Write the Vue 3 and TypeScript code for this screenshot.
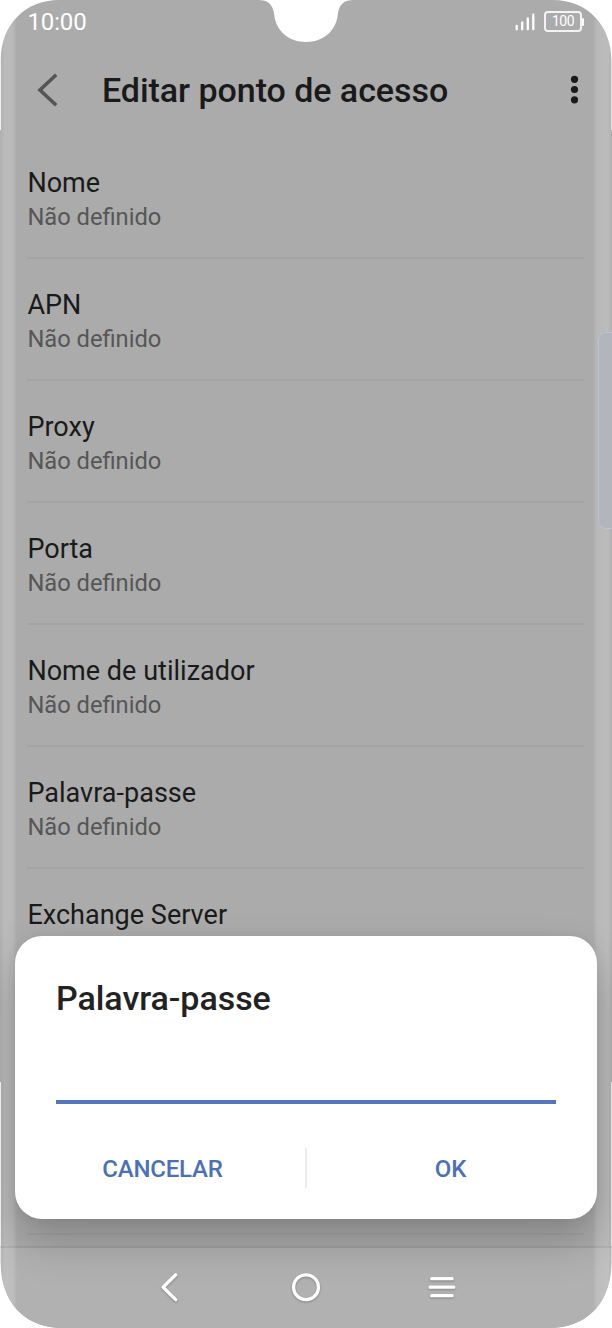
<script setup lang="ts">
import { ref } from 'vue'

interface Setting {
  label: string
  value: string
}

const unset = 'Não definido'
const settings: Setting[] = [
  { label: 'Nome', value: unset },
  { label: 'APN', value: unset },
  { label: 'Proxy', value: unset },
  { label: 'Porta', value: unset },
  { label: 'Nome de utilizador', value: unset },
  { label: 'Palavra-passe', value: unset },
  { label: 'Exchange Server', value: unset },
  { label: 'MMSC', value: unset },
]
const password = ref('')
</script>

<template>
  <div class="phone">
    <header class="status">
      <span class="time">10:00</span>
      <svg class="signal" width="20" height="18" viewBox="0 0 20 18">
        <path d="M1.7 12.8V16.3M7.2 9.3V16.3M12.8 5.4V16.3M18.3 1.7V16.3" />
      </svg>
      <span class="battery">100</span>
    </header>

    <div class="appbar">
      <svg class="back" width="24" height="36" viewBox="0 0 24 36">
        <path d="M21.2 2.8L5 18L21.2 33.2" />
      </svg>
      <h1>Editar ponto de acesso</h1>
      <svg class="more" width="10" height="30" viewBox="0 0 10 30">
        <circle cx="4.5" cy="4.3" r="3.6" /><circle cx="4.5" cy="14.5" r="3.6" /><circle cx="4.5" cy="24.8" r="3.6" />
      </svg>
    </div>

    <ul class="list">
      <li v-for="item in settings" :key="item.label">
        <span class="label">{{ item.label }}</span>
        <span class="value">{{ item.value }}</span>
      </li>
    </ul>

    <div class="navbar">
      <svg width="32" height="32" viewBox="0 0 32 32"><path d="M21.7 3.8L9.1 16.2L21.7 28.6" /></svg>
      <svg width="32" height="32" viewBox="0 0 32 32"><circle cx="16" cy="16.2" r="12.4" /></svg>
      <svg width="32" height="32" viewBox="0 0 32 32"><path d="M5.7 7.7H26.1M4.1 16.2H27.8M5.7 24.7H26.1" /></svg>
    </div>

    <div class="edge left"></div>
    <div class="edge right"></div>
    <div class="handle"></div>

    <section class="dialog">
      <h2>Palavra-passe</h2>
      <input v-model="password" type="password" aria-label="Palavra-passe" />
      <div class="actions">
        <button type="button">CANCELAR</button>
        <button type="button">OK</button>
      </div>
    </section>
  </div>
</template>

<style>
body {
  margin: 0;
  background: #fff;
}
</style>

<style scoped>
.phone {
  position: relative;
  width: 612px;
  height: 1328px;
  overflow: hidden;
  display: flex;
  flex-direction: column;
  background: #ababab;
  font-family: Roboto, "Liberation Sans", sans-serif;
  color: #1a1a1a;
  clip-path: path("M59 0H258C268 0 273 4 274.3 15C276 31 289 42 306 42C323 42 336 31 337.7 15C339 4 344 0 354 0H553C587 0 611.3 25 611.3 60V130H612V1082H611.3V1262C611.3 1303 587 1328 549 1328H63C25 1328 0.8 1303 0.8 1262V1082H0V130H0.8V60C0.8 25 25 0 59 0Z");
}
.status {
  flex: none;
  box-sizing: border-box;
  height: 44px;
  display: flex;
  align-items: center;
  padding: 0 28px 2px 27.5px;
  color: #fff;
}
.time {
  flex: 1;
  font-size: 24px;
  line-height: 28px;
  letter-spacing: -0.15px;
  padding-top: 2px;
}
.signal {
  margin: 2px 9px 0 0;
  fill: none;
  stroke: #fff;
  stroke-width: 2.3;
  stroke-linecap: round;
}
.battery {
  position: relative;
  box-sizing: border-box;
  width: 38px;
  height: 21px;
  border: 2px solid rgba(255, 255, 255, 0.85);
  border-radius: 4px;
  font-size: 14px;
  line-height: 17px;
  letter-spacing: -0.5px;
  text-align: center;
  margin-right: 2px;
}
.battery::after {
  content: "";
  position: absolute;
  left: 36px;
  top: 5px;
  width: 2px;
  height: 8px;
  border-radius: 1px;
  background: #fff;
}
.appbar {
  flex: none;
  height: 93px;
  box-sizing: border-box;
  display: flex;
  align-items: center;
  padding: 0 32px 1px 35px;
}
.back {
  fill: none;
  stroke: #555;
  stroke-width: 3.6;
}
h1 {
  flex: 1;
  margin: 0 0 0 43px;
  font-size: 34px;
  line-height: 40px;
  font-weight: 500;
  letter-spacing: -0.05px;
}
.more {
  fill: #1a1a1a;
}
.list {
  flex: none;
  height: 1109px;
  overflow: hidden;
  list-style: none;
  margin: 0;
  padding: 0 28px 0 27.4px;
}
.list li {
  box-sizing: border-box;
  height: 122px;
  padding-top: 30px;
  border-bottom: 2px solid #a4a4a4;
  display: flex;
  flex-direction: column;
}
.list li:last-child {
  height: 244px;
}
.label {
  font-size: 27px;
  line-height: 32px;
  letter-spacing: 0.02px;
}
.value {
  margin-top: 4px;
  font-size: 23.7px;
  line-height: 28px;
  color: #565656;
}
.navbar {
  flex: none;
  height: 82px;
  box-sizing: border-box;
  padding-bottom: 3px;
  border-top: 2px solid #a0a0a0;
  background: #b1b1b1;
  display: flex;
  justify-content: center;
  align-items: center;
}
.navbar svg {
  margin: 0 52px;
  fill: none;
  stroke: #fff;
  stroke-width: 3.3;
  stroke-linecap: round;
  stroke-linejoin: round;
  filter: drop-shadow(0 1px 1px rgba(0, 0, 0, 0.25));
}
.edge {
  position: absolute;
  top: 0;
  bottom: 0;
  width: 17px;
}
.left {
  left: 0;
  background: linear-gradient(90deg, rgba(255, 255, 255, 0.05), rgba(255, 255, 255, 0.19) 5px, rgba(255, 255, 255, 0.16) 13px, transparent);
}
.right {
  right: 0;
  width: 19px;
  background: linear-gradient(270deg, rgba(255, 255, 255, 0.06), rgba(255, 255, 255, 0.2) 4px, rgba(255, 255, 255, 0.16) 15px, transparent);
}
.handle {
  position: absolute;
  right: -8px;
  top: 332px;
  box-sizing: border-box;
  width: 22px;
  height: 197px;
  border: 1.5px solid #bac3d3;
  border-radius: 8px;
  background: #b2b6bc;
}
.dialog {
  position: absolute;
  left: 15px;
  top: 936px;
  width: 582px;
  height: 283px;
  box-sizing: border-box;
  padding: 42px 41px 0;
  border-radius: 27px;
  background: #fff;
  box-shadow: 0 23px 44px rgba(0, 0, 0, 0.21), 0 2px 14px rgba(0, 0, 0, 0.06);
}
h2 {
  margin: 0;
  font-size: 34px;
  line-height: 40px;
  font-weight: 500;
  letter-spacing: -0.05px;
  color: #222;
}
input {
  display: block;
  box-sizing: border-box;
  width: 500px;
  height: 65px;
  margin-top: 21px;
  padding: 0;
  border: 0;
  border-bottom: 4px solid #5377bd;
  border-radius: 0;
  background: transparent;
  outline: none;
  font: 27px Roboto, sans-serif;
}
.actions {
  display: flex;
  height: 40px;
  margin: 44px -36px 0;
}
button {
  flex: 1;
  border: 0;
  padding: 2px 0 0;
  background: none;
  font: 500 24px/28px Roboto, sans-serif;
  letter-spacing: -0.2px;
  color: #4c70b8;
}
button + button {
  border-left: 2px solid #ececec;
  text-indent: 2px;
}
</style>
